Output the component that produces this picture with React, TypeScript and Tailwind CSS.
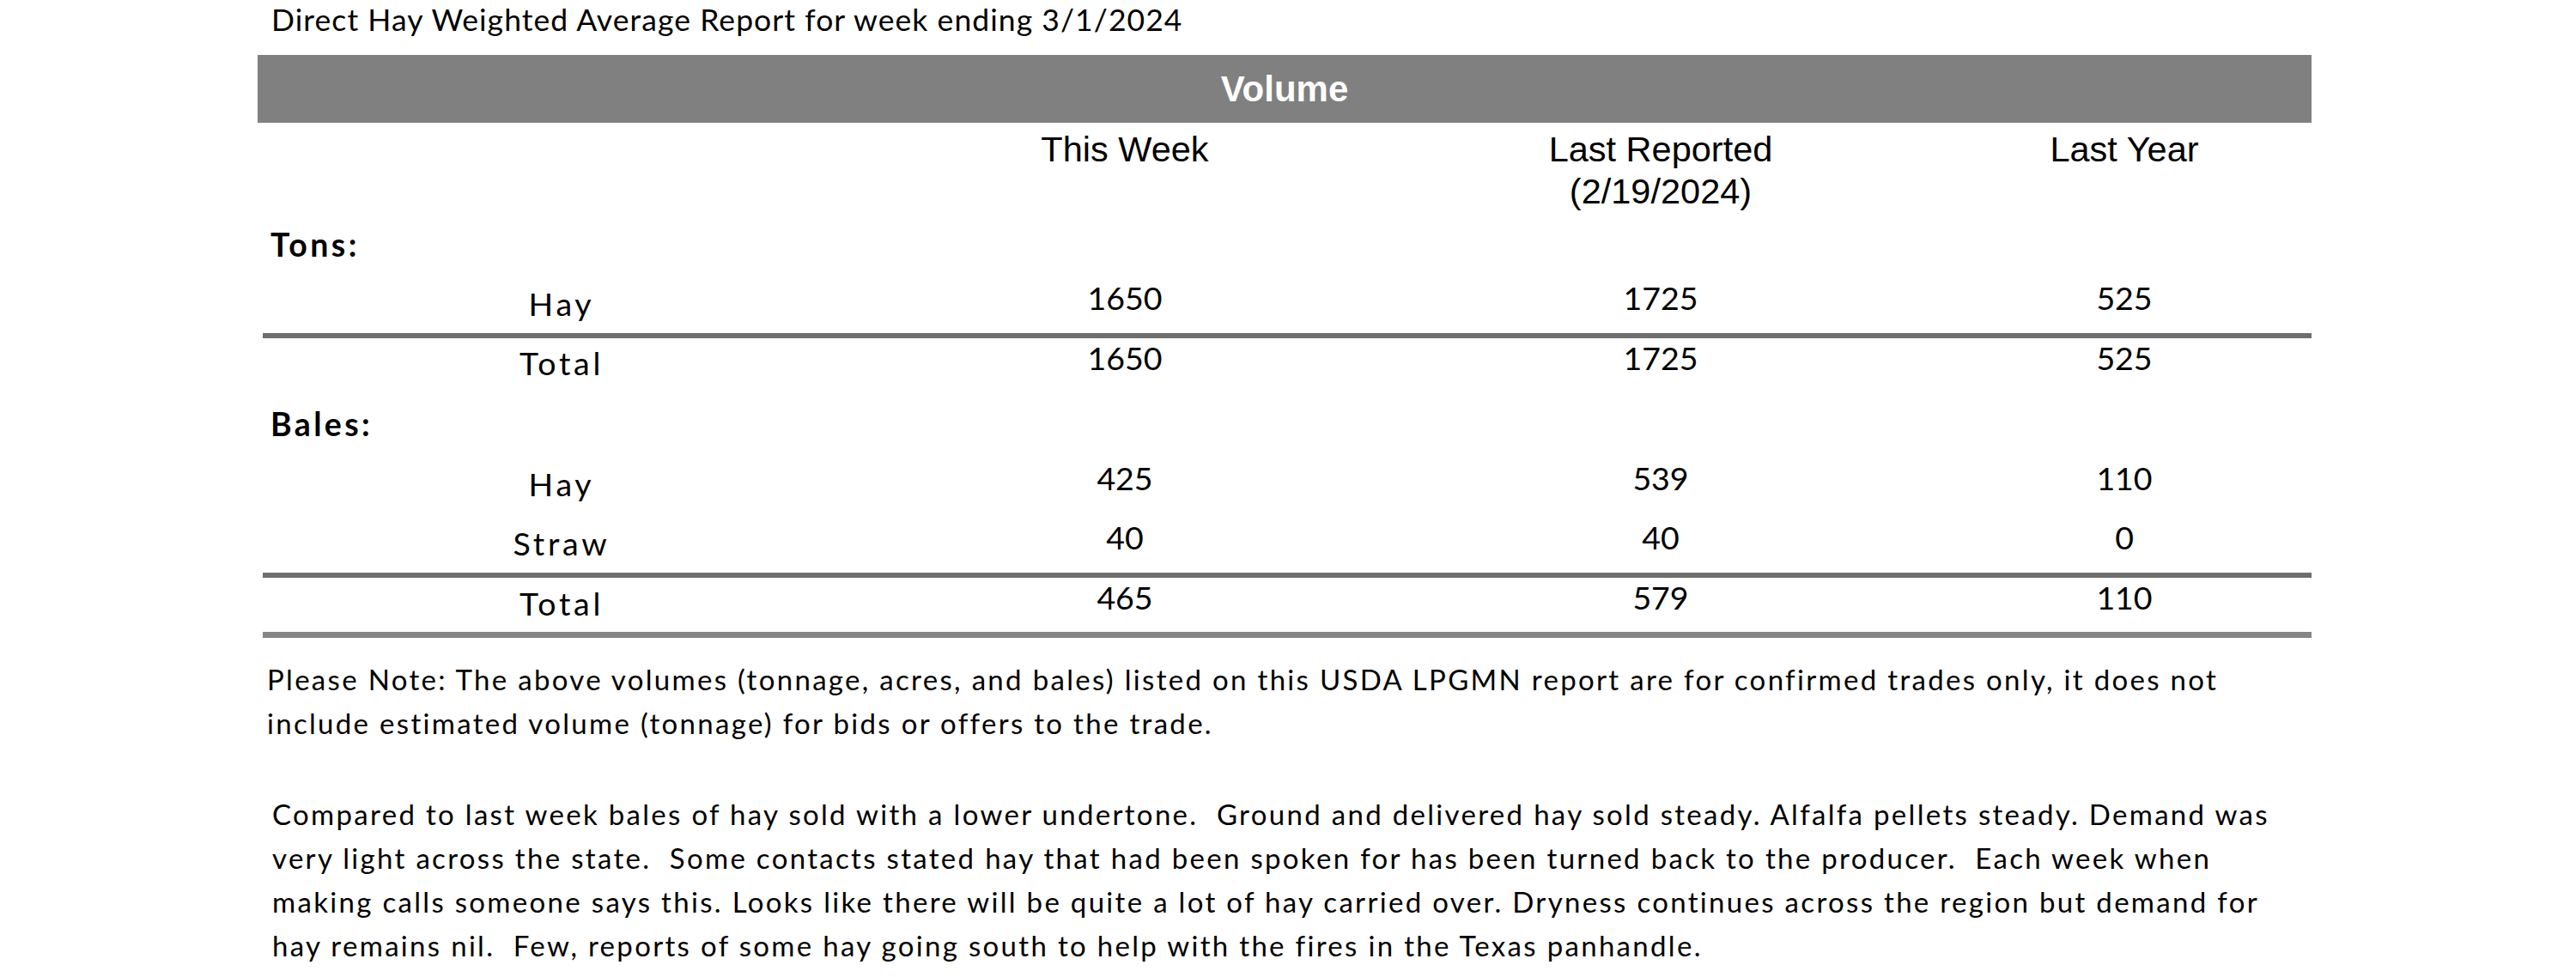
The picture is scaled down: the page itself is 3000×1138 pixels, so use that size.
type RowProps = {
  label: string;
  values: string[];
  className?: string;
  labelPad?: string;
};

const cols = 'grid grid-cols-[708px_604px_644px_436px]';

function DataRow({ label, values, className = '', labelPad = 'pt-[7px]' }: RowProps) {
  return (
    <div className={`${cols} font-['Lato',sans-serif] text-[37.5px] leading-[45px] text-black ${className}`}>
      <div className={`text-center tracking-[0.1em] ${labelPad}`}>{label}</div>
      {values.map((v, i) => (
        <div key={i} className="text-center">
          {v}
        </div>
      ))}
    </div>
  );
}

function GroupLabel({ text, className = '' }: { text: string; className?: string }) {
  return (
    <div className={`pl-[15px] font-['Lato',sans-serif] text-[37.5px] font-bold leading-[45px] tracking-[0.09em] text-black ${className}`}>
      {text}
    </div>
  );
}

export default function App() {
  return (
    <div className="h-[1138px] w-[3000px] overflow-hidden bg-white">
      <div className="ml-[300px] w-[2392px]">
        <p className="mt-[2px] pl-[16px] font-['Lato',sans-serif] text-[35.5px] leading-[42px] tracking-[0.03em] text-black">
          Direct Hay Weighted Average Report for week ending 3/1/2024
        </p>

        <div className="mt-[20px] flex h-[79px] items-center justify-center bg-[#808080]">
          <span className="font-['Liberation_Sans',Arial,sans-serif] text-[42px] font-bold text-white">Volume</span>
        </div>

        <div className={`${cols} mt-[6px] font-['Liberation_Sans',Arial,sans-serif] text-[41.5px] leading-[49px] text-black`}>
          <div />
          <div className="text-center">This Week</div>
          <div className="text-center">
            Last Reported
            <br />
            (2/19/2024)
          </div>
          <div className="text-center">Last Year</div>
        </div>

        <GroupLabel text="Tons:" className="mt-[15px]" />
        <DataRow label="Hay" values={['1650', '1725', '525']} className="mt-[17px] h-[64px]" />
        <div className="ml-[6px] h-[6px] bg-[#6e6e6e]" />
        <DataRow label="Total" values={['1650', '1725', '525']} className="h-[77px]" labelPad="pt-[6px]" />

        <GroupLabel text="Bales:" />
        <DataRow label="Hay" values={['425', '539', '110']} className="mt-[18px] h-[69px]" />
        <DataRow label="Straw" values={['40', '40', '0']} className="h-[64px]" />
        <div className="ml-[6px] h-[6px] bg-[#6e6e6e]" />
        <DataRow label="Total" values={['465', '579', '110']} className="h-[63px]" />
        <div className="ml-[6px] h-[7px] bg-[#858585]" />

        <p className="mt-[23px] whitespace-nowrap pl-[11px] font-['Lato',sans-serif] text-[33px] leading-[51px] tracking-[0.07em] text-black">
          Please Note: The above volumes (tonnage, acres, and bales) listed on this USDA LPGMN report are for confirmed trades only, it does not
          <br />
          include estimated volume (tonnage) for bids or offers to the trade.
        </p>

        <p className="mt-[55px] whitespace-pre pl-[17px] font-['Lato',sans-serif] text-[33px] leading-[51px] tracking-[0.07em] text-black">
          {'Compared to last week bales of hay sold with a lower undertone.  Ground and delivered hay sold steady. Alfalfa pellets steady. Demand was\n'}
          {'very light across the state.  Some contacts stated hay that had been spoken for has been turned back to the producer.  Each week when\n'}
          {'making calls someone says this. Looks like there will be quite a lot of hay carried over. Dryness continues across the region but demand for\n'}
          {'hay remains nil.  Few, reports of some hay going south to help with the fires in the Texas panhandle.'}
        </p>
      </div>
    </div>
  );
}
